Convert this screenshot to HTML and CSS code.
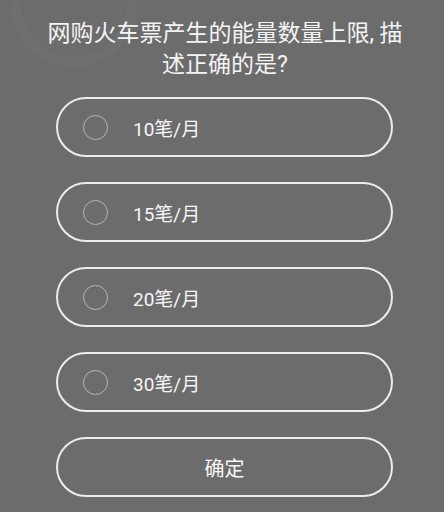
FILE: index.html
```html
<!DOCTYPE html>
<html lang="zh">
<head>
<meta charset="utf-8">
<title>答题</title>
<link rel="stylesheet" href="styles.css">
</head>
<body>
<div class="page">
  <svg class="mark" width="160" height="90" viewBox="0 0 160 90">
    <circle cx="74" cy="4" r="58" fill="none" stroke="rgba(255,255,255,0.025)" stroke-width="10"/>
  </svg>
  <h1 class="question">网购火车票产生的能量数量上限, 描述正确的是?</h1>
  <div class="options">
    <label class="option"><span class="radio"></span><span class="text">10笔/月</span></label>
    <label class="option"><span class="radio"></span><span class="text">15笔/月</span></label>
    <label class="option"><span class="radio"></span><span class="text">20笔/月</span></label>
    <label class="option"><span class="radio"></span><span class="text">30笔/月</span></label>
    <button class="confirm">确定</button>
  </div>
</div>
</body>
</html>
```
FILE: styles.css
```css
html, body {
  margin: 0;
  padding: 0;
  background: #6c6c6c;
}

.page {
  position: relative;
  width: 444px;
  height: 512px;
  overflow: hidden;
  font-family: Roboto, "Noto Sans CJK SC", sans-serif;
  color: #f4f4f4;
}

.mark {
  position: absolute;
  left: 0;
  top: 0;
}

.question {
  position: relative;
  margin: 0;
  padding: 18px 34px 0 40px;
  font-size: 23px;
  font-weight: 400;
  line-height: 31px;
  text-align: center;
}

.options {
  display: flex;
  flex-direction: column;
  gap: 25px;
  width: 337px;
  margin: 17px 0 0 56px;
}

.option,
.confirm {
  box-sizing: border-box;
  height: 60px;
  border: 2px solid #ececec;
  border-radius: 30px;
  background: transparent;
}

.option {
  display: flex;
  align-items: center;
  padding-left: 25px;
}

.radio {
  box-sizing: border-box;
  width: 25px;
  height: 25px;
  border: 1.6px solid #b4b4b4;
  border-radius: 50%;
}

.text {
  margin-left: 25px;
  font-size: 19px;
  color: #f6f6f6;
}

.confirm {
  font-family: inherit;
  font-size: 20px;
  color: #f6f6f6;
  padding: 0;
}
```
